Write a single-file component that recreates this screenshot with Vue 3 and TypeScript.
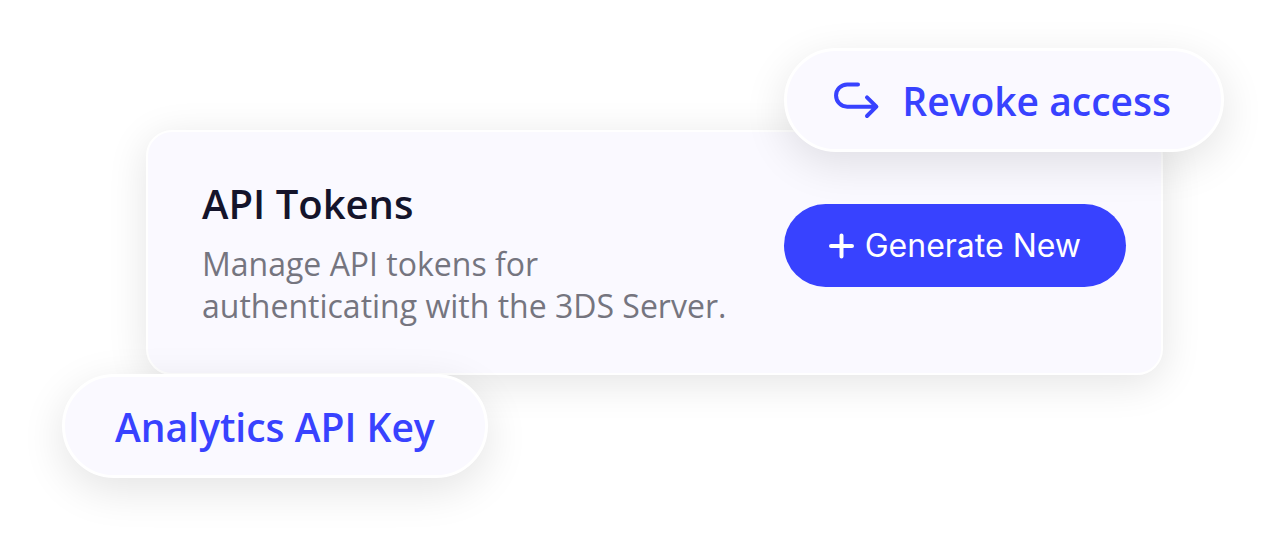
<script setup lang="ts">
const title: string = 'API Tokens'
const description: string[] = ['Manage API tokens for', 'authenticating with the 3DS Server.']
</script>

<template>
  <main class="scene">
    <section class="card" aria-labelledby="card-title">
      <div class="copy">
        <h1 id="card-title" class="title">{{ title }}</h1>
        <p class="description">
          <span v-for="line in description" :key="line" class="line">{{ line }}</span>
        </p>
      </div>
      <button type="button" class="generate">
        <svg class="plus" viewBox="0 0 26 26" aria-hidden="true">
          <path d="M12.5 2.5V23.5M2 13H23" />
        </svg>
        Generate New
      </button>

      <button type="button" class="pill revoke">
        <svg class="arrow" viewBox="0 0 48 48" aria-hidden="true">
          <path d="M26 8.4H15.2a11.15 11.15 0 0 0 0 22.3H44M35 21.4L44.4 30.7L35 40" />
        </svg>
        Revoke access
      </button>
      <button type="button" class="pill analytics">Analytics API Key</button>
    </section>
  </main>
</template>

<style>
body {
  margin: 0;
  background: #fff;
}
</style>

<style scoped>
.scene {
  padding: 130px 124px 180px 146px;
  overflow: hidden;
  font-family: "Open Sans", "Noto Sans", sans-serif;
}

.card {
  position: relative;
  display: flex;
  justify-content: space-between;
  align-items: flex-start;
  padding: 45px 35px 46px 54px;
  border: 2px solid #fff;
  border-radius: 26px;
  background: #faf9ff;
  box-shadow: 0 8px 40px rgba(0, 0, 0, 0.11);
}

.title {
  margin: 0 0 12px;
  color: #14142b;
  font-size: 40px;
  font-weight: 600;
  line-height: 54px;
}

.description {
  margin: 0;
  color: #75757f;
  font-size: 32px;
  line-height: 42px;
}

.line {
  display: block;
}

button {
  margin: 0;
  border: 0;
  cursor: pointer;
  white-space: nowrap;
}

.generate {
  display: flex;
  align-items: center;
  gap: 10px;
  height: 83px;
  margin-top: 27px;
  padding: 0 45px;
  border-radius: 42px;
  background: #3842ff;
  color: #fff;
  font-family: Inter, sans-serif;
  font-size: 32px;
}

svg {
  flex: none;
  fill: none;
  stroke: currentColor;
  stroke-width: 4;
  stroke-linecap: round;
  stroke-linejoin: round;
}

.plus {
  width: 26px;
  height: 26px;
}

.arrow {
  width: 48px;
  height: 48px;
}

.pill {
  position: absolute;
  display: flex;
  align-items: center;
  height: 104px;
  border: 3px solid #fff;
  border-radius: 52px;
  background: #faf9ff;
  box-shadow: 0 12px 44px rgba(0, 0, 0, 0.11);
  color: #3842ff;
  font-family: inherit;
  font-size: 39px;
  font-weight: 600;
}

.revoke {
  top: -84px;
  right: -63px;
  gap: 22px;
  padding: 0 50px 0 45px;
}

.analytics {
  bottom: -105px;
  left: -86px;
  padding: 0 50px;
}
</style>
